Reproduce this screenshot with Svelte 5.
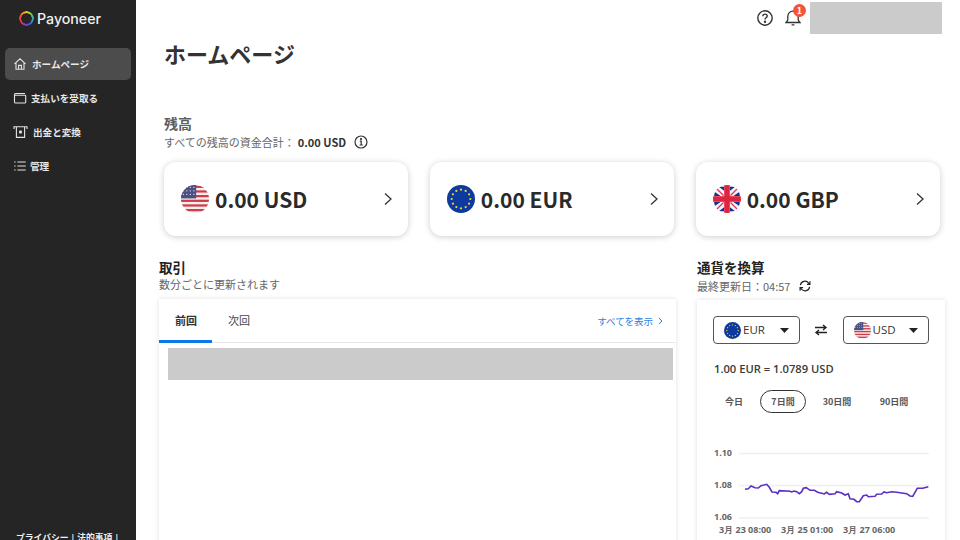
<script>
  const nav = [
    { label: 'ホームページ', icon: 'home', active: true },
    { label: '支払いを受取る', icon: 'wallet' },
    { label: '出金と変換', icon: 'atm' },
    { label: '管理', icon: 'list' }
  ];
  const balances = [
    { text: '0.00 USD', flag: 'us' },
    { text: '0.00 EUR', flag: 'eu' },
    { text: '0.00 GBP', flag: 'gb' }
  ];
  const periods = ['今日', '7日間', '30日間', '90日間'];
  const raw = [[165,208],[175,206],[183,198],[195,203],[205,204],[213,197],[230,193],[238,202],[246,216],[258,217],[263,221],[268,212],[300,214],[305,216],[312,213],[320,215],[328,221],[335,215],[340,205],[349,203],[360,211],[373,211],[383,217],[403,222],[410,217],[418,223],[435,221],[440,215],[455,219],[465,225],[475,221],[480,236],[492,238],[500,245],[508,245],[520,227],[530,225],[535,230],[555,229],[560,223],[575,222],[582,216],[590,218],[605,215],[620,217],[650,221],[660,228],[668,229],[682,205],[698,205],[715,200]];
  const line = raw.map(([x, y]) => `${(x / 3 - 23).toFixed(1)},${(y / 3 - 20).toFixed(1)}`).join(' ');
  const stars = Array.from({ length: 12 }, (_, i) => {
    const a = (i * Math.PI) / 6;
    return [12 + 8 * Math.cos(a), 12 + 8 * Math.sin(a)];
  });
</script>

{#snippet flag(kind, size)}
  <svg class="flag" width={size} height={size} viewBox="0 0 24 24">
    {#if kind === 'us'}
      <rect width="24" height="24" fill="#f3eeee" />
      {#each [0, 4, 8, 12, 16, 20] as y}
        <rect y={y + 0.6} width="24" height="1.9" fill="#cf3a47" />
      {/each}
      <rect width="13" height="11.5" fill="#4a4f86" />
      {#each [2, 5, 8] as y}
        {#each [2, 5, 8, 11] as x}
          <circle cx={x} cy={y} r="0.6" fill="#e8e8f2" />
        {/each}
      {/each}
    {:else if kind === 'eu'}
      <rect width="24" height="24" fill="#0c3a9e" />
      {#each stars as s}
        <circle cx={s[0]} cy={s[1]} r="0.95" fill="#f4cf3a" />
      {/each}
    {:else}
      <rect width="24" height="24" fill="#f2f2f6" />
      <path d="M5 1.5 9.5 5V1.5ZM19 1.5 14.5 5V1.5ZM1.5 6 6.5 9.5H1ZM22.5 6 17.5 9.5H23ZM1 14.5H6.5L1.5 18ZM23 14.5H17.5L22.5 18ZM9.5 22.5V19L5 22.5ZM14.5 22.5V19L19 22.5Z" fill="#1a2f8c" />
      <path d="M3 3 9 9M21 3 15 9M3 21 9 15M21 21 15 15" stroke="#e0334a" stroke-width="1" />
      <rect x="9.6" width="4.8" height="24" fill="#e0233f" />
      <rect y="9.6" width="24" height="4.8" fill="#e0233f" />
    {/if}
  </svg>
{/snippet}

{#snippet navIcon(kind)}
  <svg class="nav-icon i-{kind}" width="14" height="14" viewBox="0 0 14 14" fill="none" stroke="#e4e4e4" stroke-width="1.1">
    {#if kind === 'home'}
      <path d="M1.5 6.8 7 1.8l5.5 5M3 5.8v6.4h8V5.8M5.6 12.2V8.4h2.8v3.8" />
    {:else if kind === 'wallet'}
      <path d="M2.5 2.5h9.5M1.5 3.5v7.4c0 .7.4 1.1 1.1 1.1h9.3c.5 0 .8-.3.8-.8V5c0-.5-.3-.8-.8-.8H2.2c-.4 0-.7-.3-.7-.7 0-.6.4-1 1-1" />
    {:else if kind === 'atm'}
      <path d="M1 4V1.8h13V4M3.4 1.8v10.6h8.2V1.8" />
      <rect x="6.1" y="5.6" width="2.8" height="2.8" fill="#e4e4e4" stroke="none" />
    {:else}
      <path d="M4.4 3h8.4M4.4 7h8.4M4.4 11h8.4M1.2 3h1.4M1.2 7h1.4M1.2 11h1.4" />
    {/if}
  </svg>
{/snippet}

{#snippet chevron()}
  <svg width="8" height="14" viewBox="0 0 8 14" fill="none" stroke="#333" stroke-width="1.3"><path d="M1 1.5 7 7l-6 5.5" /></svg>
{/snippet}

{#snippet caret()}
  <svg class="caret" width="9" height="5" viewBox="0 0 9 5"><path d="M0 0h9L4.5 5z" fill="#222" /></svg>
{/snippet}

<div class="shell">
  <aside class="sidebar">
    <div class="logo">
      <span class="ring"></span>
      <span class="logo-text">Payoneer</span>
    </div>
    <nav>
      {#each nav as item}
        <div class="nav-item" class:active={item.active}>
          {@render navIcon(item.icon)}
          <span>{item.label}</span>
        </div>
      {/each}
    </nav>
    <div class="legal">プライバシー | 法的事項 |</div>
  </aside>

  <main>
    <header class="topbar">
      <svg width="18" height="18" viewBox="0 0 18 18" fill="none" stroke="#333" stroke-width="1.4">
        <circle cx="9" cy="9" r="7.2" />
        <path d="M6.8 7.2c0-1.3 1-2.1 2.2-2.1s2.2.8 2.2 2c0 1.7-2.2 1.7-2.2 3.4" />
        <circle cx="9" cy="12.8" r=".5" fill="#333" />
      </svg>
      <div class="bell">
        <svg width="16" height="18" viewBox="0 0 16 18" fill="none" stroke="#333" stroke-width="1.3">
          <path d="M1 13.5h14l-1.8-2.4V7.4C13.2 4.3 11 2.2 8 2.2S2.8 4.3 2.8 7.4v3.7zM6.6 15.8h2.8" />
        </svg>
        <span class="badge">1</span>
      </div>
      <div class="redacted account"></div>
    </header>

    <h1>ホームページ</h1>

    <section class="balance">
      <h2>残高</h2>
      <div class="total">
        <span>すべての残高の資金合計：</span>
        <b>0.00 USD</b>
        <svg width="14" height="14" viewBox="0 0 14 14" fill="none" stroke="#333" stroke-width="1.2">
          <circle cx="7" cy="7" r="6" />
          <path d="M5.8 6.2H7.2V10M5.6 10h3.2" />
          <circle cx="7" cy="4" r=".5" fill="#333" />
        </svg>
      </div>
      <div class="cards">
        {#each balances as b}
          <div class="card">
            {@render flag(b.flag, 28)}
            <span class="amount">{b.text}</span>
            {@render chevron()}
          </div>
        {/each}
      </div>
    </section>

    <div class="lower">
      <section class="tx">
        <h3>取引</h3>
        <p class="muted">数分ごとに更新されます</p>
        <div class="panel tx-panel">
          <div class="tabs">
            <span class="tab on">前回</span>
            <span class="tab">次回</span>
            <a class="all">すべてを表示<svg width="5" height="8" viewBox="0 0 5 8" fill="none" stroke="#2f7fe0" stroke-width="1"><path d="M.8 1 4 4 .8 7" /></svg></a>
          </div>
          <div class="redacted tx-row"></div>
        </div>
      </section>

      <section class="fx">
        <h3>通貨を換算</h3>
        <p class="muted updated">
          最終更新日：04:57
          <svg width="12" height="12" viewBox="0 0 12 12" fill="none" stroke="#222" stroke-width="1.2">
            <path d="M1.4 5.2A4.6 4.6 0 0 1 9.6 3L10.6 4.2M10.6 6.8A4.6 4.6 0 0 1 2.4 9L1.4 7.8" />
            <path d="M10.9 1.3v3.1H7.9M1.1 10.7V7.6h3" />
          </svg>
        </p>
        <div class="panel fx-panel">
          <div class="pickers">
            <div class="select">{@render flag('eu', 17)}<span>EUR</span>{@render caret()}</div>
            <svg width="14" height="12" viewBox="0 0 14 12" fill="none" stroke="#222" stroke-width="1.4">
              <path d="M1 3.5h11M9 1l3 2.5L9 6M13 8.5H2M5 6 2 8.5 5 11" />
            </svg>
            <div class="select">{@render flag('us', 17)}<span>USD</span>{@render caret()}</div>
          </div>
          <div class="rate">1.00 EUR = 1.0789 USD</div>
          <div class="periods">
            {#each periods as p, i}
              <span class="period" class:sel={i === 1}>{p}</span>
            {/each}
          </div>
          <svg class="chart" width="216" height="100" viewBox="0 0 216 100">
            <g stroke="#f0f0f0" stroke-width="1.5">
              <line x1="26" x2="216" y1="13.5" y2="13.5" />
              <line x1="26" x2="216" y1="45.5" y2="45.5" />
              <line x1="26" x2="216" y1="78" y2="78" />
            </g>
            <g class="ticks">
              <text x="1" y="16">1.10</text>
              <text x="1" y="48">1.08</text>
              <text x="1" y="80">1.06</text>
              <text x="6" y="93">3月 23 08:00</text>
              <text x="68" y="93">3月 25 01:00</text>
              <text x="130" y="93">3月 27 06:00</text>
            </g>
            <polyline points={line} fill="none" stroke="#5a2fc2" stroke-width="1.6" />
          </svg>
        </div>
      </section>
    </div>
  </main>
</div>

<style>
  :global(body) {
    margin: 0;
    background: #fff;
  }
  .shell {
    display: flex;
    width: 960px;
    height: 540px;
    overflow: hidden;
    font-family: "Noto Sans CJK JP", "Noto Sans", sans-serif;
    color: #333;
  }
  .sidebar {
    flex: 0 0 136px;
    display: flex;
    flex-direction: column;
    background: #252525;
    color: #eee;
  }
  .logo {
    display: flex;
    align-items: center;
    gap: 3px;
    height: 37px;
    padding-left: 19px;
    margin-bottom: 1px;
  }
  .ring {
    width: 15px;
    height: 15px;
    border-radius: 50%;
    background: conic-gradient(#f5d327 0deg, #6fc04a 50deg, #2aa6d8 100deg, #3a55d0 150deg, #8a3ac0 190deg, #e8304a 240deg, #f0552a 300deg, #f5a020 340deg, #f5d327 360deg);
    -webkit-mask: radial-gradient(circle, transparent 5px, #000 5.5px);
    mask: radial-gradient(circle, transparent 5px, #000 5.5px);
  }
  .logo-text {
    font-family: Inter, sans-serif;
    font-size: 14.2px;
    font-weight: 500;
    color: #f0f0f0;
  }
  nav {
    display: flex;
    flex-direction: column;
    gap: 2px;
    margin-top: 10px;
    padding: 0 5px;
  }
  .nav-item {
    display: flex;
    align-items: center;
    gap: 5px;
    height: 32px;
    padding-left: 8px;
    border-radius: 5px;
    font-size: 9.6px;
    font-weight: 700;
    color: #e8e8e8;
  }
  .nav-item.active {
    background: #4c4c4c;
  }
  .nav-icon {
    flex: none;
    overflow: visible;
  }
  .i-wallet {
    margin-right: -1px;
  }
  .i-atm {
    margin-right: 1px;
  }
  .i-list {
    margin-right: -2px;
  }
  .legal {
    margin-top: auto;
    margin-bottom: -4px;
    padding-left: 16px;
    font-size: 8.8px;
    font-weight: 700;
    word-spacing: 1px;
    color: #f2f2f2;
    white-space: nowrap;
  }
  main {
    flex: 1;
    min-width: 0;
    display: flex;
    flex-direction: column;
  }
  .topbar {
    display: flex;
    align-items: center;
    justify-content: flex-end;
    gap: 11px;
    height: 32px;
    padding: 2px 18px 0 0;
    flex: none;
  }
  .bell {
    position: relative;
    display: flex;
    margin-right: -2px;
  }
  .badge {
    position: absolute;
    top: -5px;
    left: 8px;
    width: 13px;
    height: 13px;
    border-radius: 50%;
    background: #f4553a;
    color: #fff;
    font-size: 9px;
    font-weight: 700;
    line-height: 13px;
    text-align: center;
  }
  .redacted {
    background: #cbcbcb;
  }
  .account {
    width: 132px;
    height: 32px;
  }
  h1 {
    margin: 3px 0 0 28px;
    font-size: 22px;
    font-weight: 700;
    line-height: 32px;
    color: #333;
  }
  .balance {
    margin: 45px 0 0 28px;
    width: 776px;
  }
  h2 {
    margin: 0;
    font-size: 14px;
    font-weight: 700;
    line-height: 19px;
    color: #5a5f66;
  }
  .total {
    display: flex;
    align-items: center;
    height: 18px;
    font-size: 11px;
    color: #666;
  }
  .total b {
    margin-left: 3px;
    margin-right: 8px;
    font-weight: 700;
    color: #333;
    font-size: 11px;
  }
  .cards {
    display: grid;
    grid-template-columns: repeat(3, 1fr);
    column-gap: 21.5px;
    margin-top: 11px;
  }
  .card {
    display: flex;
    align-items: center;
    height: 74px;
    box-sizing: border-box;
    padding: 0 16px 0 17px;
    border-radius: 12px;
    background: #fff;
    box-shadow: 0 1px 6px rgba(0, 0, 0, 0.2);
  }
  .card .amount {
    flex: 1;
    margin-left: 6px;
    font-size: 21px;
    font-weight: 700;
    color: #2a2a2a;
  }
  .flag {
    flex: none;
    border-radius: 50%;
    display: block;
  }
  .lower {
    display: flex;
    margin: 22px 0 0 23px;
    gap: 21px;
  }
  .tx {
    flex: 0 0 517px;
  }
  .fx {
    flex: 0 0 248px;
    min-width: 0;
  }
  h3 {
    margin: 0;
    font-size: 13.5px;
    font-weight: 700;
    line-height: 18px;
    color: #222;
  }
  .muted {
    margin: 0;
    font-size: 11px;
    line-height: 16px;
    color: #666;
  }
  .updated {
    display: flex;
    align-items: center;
    gap: 9px;
    line-height: 20px;
  }
  .panel {
    background: #fff;
    box-shadow: 0 0 5px rgba(0, 0, 0, 0.12);
    height: 300px;
  }
  .tx-panel {
    margin-top: 7px;
  }
  .tabs {
    display: flex;
    align-items: center;
    height: 44px;
    border-bottom: 1px solid #e8e8e8;
    box-sizing: border-box;
  }
  .tab {
    width: 53px;
    height: 44px;
    box-sizing: border-box;
    padding: 12px 0 0 1px;
    text-align: center;
    font-size: 11px;
    line-height: 18px;
    color: #444;
  }
  .tab.on {
    font-weight: 700;
    color: #333;
    border-bottom: 3px solid #0a78e6;
  }
  .all {
    display: flex;
    align-items: center;
    gap: 5px;
    margin-left: auto;
    margin-right: 13px;
    font-size: 9.5px;
    color: #2f7fe0;
  }
  .tx-row {
    height: 32px;
    margin: 5px 3px 0 9px;
  }
  .fx-panel {
    margin-top: 4px;
    box-sizing: border-box;
    padding: 16px;
  }
  .pickers {
    display: flex;
    align-items: center;
    justify-content: space-between;
  }
  .select {
    display: flex;
    align-items: center;
    gap: 2px;
    width: 86.5px;
    height: 28px;
    box-sizing: border-box;
    padding: 0 10px;
    border: 1px solid #555;
    border-radius: 4px;
    font-family: "Open Sans", sans-serif;
    font-size: 11.5px;
    color: #333;
  }
  .select span {
    padding-bottom: 2px;
  }
  .caret {
    margin-left: auto;
  }
  .rate {
    margin-top: 15px;
    padding-left: 1px;
    font-family: "Open Sans", sans-serif;
    font-size: 11.2px;
    font-weight: 600;
    line-height: 20px;
    color: #3a3a3a;
  }
  .periods {
    display: flex;
    align-items: center;
    margin-top: 11px;
  }
  .period {
    display: block;
    box-sizing: border-box;
    height: 23px;
    line-height: 21px;
    width: 46px;
    text-align: center;
    font-size: 9px;
    font-weight: 700;
    border: 1px solid transparent;
    border-radius: 12px;
    color: #555;
  }
  .period:first-child {
    width: 42px;
    margin-right: 5px;
  }
  .period.sel {
    border-color: #333;
  }
  .period:nth-child(3) {
    margin-left: 8px;
  }
  .period:nth-child(4) {
    margin-left: 11px;
  }
  .chart {
    display: block;
    margin-top: 27px;
    overflow: visible;
  }
  .ticks text {
    font-family: "Open Sans", sans-serif;
    font-size: 9px;
    font-weight: 700;
    fill: #666;
  }
</style>
